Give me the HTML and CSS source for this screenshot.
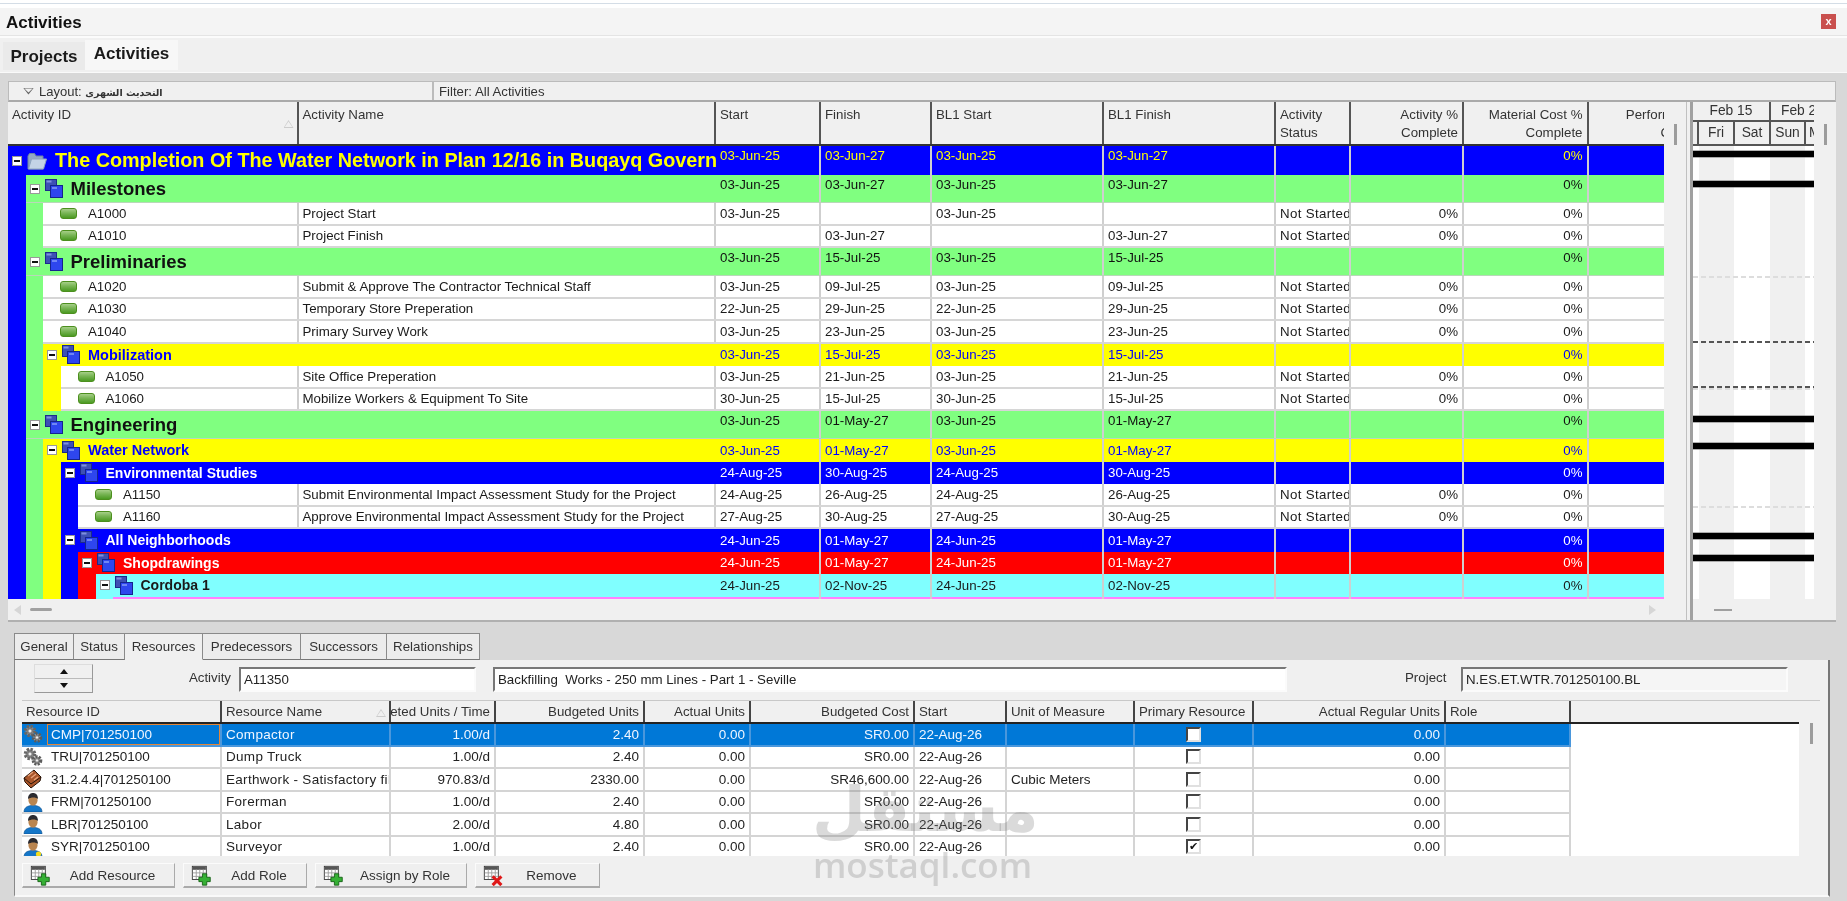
FILE: index.html
```html
<!DOCTYPE html>
<html lang="en">
<head>
<meta charset="utf-8">
<title>Activities</title>
<link rel="stylesheet" href="styles.css">
</head>
<body>
<svg class="defs" width="0" height="0" aria-hidden="true">
  <symbol id="wbs" viewBox="0 0 18 19">
    <rect x="0.5" y="0.5" width="11" height="11" fill="#3d50b4" stroke="#1b2a8c"/>
    <rect x="1.5" y="1.5" width="5" height="2" fill="#7f8fe0"/>
    <rect x="5.5" y="6.5" width="12" height="12" fill="#2e46ee" stroke="#14248e"/>
    <rect x="7" y="8" width="5" height="2" fill="#6f86f5"/>
  </symbol>
  <symbol id="folder" viewBox="0 0 20 18">
    <path d="M1 4 L1 17 L16 17 L16 4 L9 4 L7.5 1.5 L2.5 1.5 Z" fill="#93a9c4" stroke="#6e86a4"/>
    <path d="M1.5 17 L4.5 7 L19.5 7 L16.5 17 Z" fill="#c4d3e6" stroke="#8ea4bf"/>
  </symbol>
  <symbol id="gears" viewBox="0 0 20 20">
    <circle cx="7" cy="7" r="4.6" fill="#8a8a8a" stroke="#666" stroke-width="3.4" stroke-dasharray="2.2 1.4"/>
    <circle cx="7" cy="7" r="2" fill="#eee" stroke="#555" stroke-width=".6"/>
    <circle cx="14" cy="13.5" r="3.8" fill="#9a9a9a" stroke="#5c5c5c" stroke-width="3" stroke-dasharray="2 1.2"/>
    <circle cx="14" cy="13.5" r="1.7" fill="#eee" stroke="#555" stroke-width=".6"/>
  </symbol>
  <symbol id="brick" viewBox="0 0 20 20">
    <path d="M1 9 L11 1 L18 8 L17 12 L8 19 L2 13 Z" fill="#a9562a" stroke="#2a1408"/>
    <path d="M1 9 L8 15 L18 8" fill="none" stroke="#2a1408"/>
    <path d="M5 7 L10 3 M8 9 L13 5 M11 11 L15 8" stroke="#e8a27a" stroke-width="1.4"/>
  </symbol>
  <symbol id="person" viewBox="0 0 20 20">
    <path d="M1 20 C1 15 5 14 8 13.5 L12 13.5 C15 14 19 15 19 20 Z" fill="#1476c8" stroke="#0c4c88" stroke-width=".6"/>
    <ellipse cx="10" cy="8" rx="4.6" ry="5.6" fill="#b98550"/>
    <path d="M5 7 C5 2 8 1 10 1 C13 1 15 3 15 7 C13 5 8 5 5 7 Z" fill="#2b2b30"/>
  </symbol>
  <symbol id="surveyor" viewBox="0 0 20 20">
    <path d="M1 20 C1 15 5 14 8 13.5 L12 13.5 C15 14 19 15 19 20 Z" fill="#1476c8" stroke="#0c4c88" stroke-width=".6"/>
    <ellipse cx="10" cy="8" rx="4.6" ry="5.6" fill="#b98550"/>
    <path d="M5 7 C5 2 8 1 10 1 C13 1 15 3 15 7 C13 5 8 5 5 7 Z" fill="#2b2b30"/>
    <circle cx="15.5" cy="17" r="2.6" fill="#f4dc1c"/>
  </symbol>
  <symbol id="table-add" viewBox="0 0 24 24">
    <rect x="1.5" y="1.5" width="16" height="15" fill="#fff" stroke="#333"/>
    <rect x="2" y="2" width="15" height="3.5" fill="#555"/>
    <path d="M2 9 H17 M2 13 H17 M6 5 V16 M10 5 V16 M14 5 V16" stroke="#999"/>
    <path d="M13 10 H18 V14 H22 V19 H18 V23 H13 V19 H9 V14 H13 Z" fill="#35b034" stroke="#155f15"/>
  </symbol>
  <symbol id="table-del" viewBox="0 0 24 24">
    <rect x="1.5" y="1.5" width="16" height="15" fill="#fff" stroke="#333"/>
    <rect x="2" y="2" width="15" height="3.5" fill="#555"/>
    <path d="M2 9 H17 M2 13 H17 M6 5 V16 M10 5 V16 M14 5 V16" stroke="#999"/>
    <path d="M11 13 L21 23 M21 13 L11 23" stroke="#e01818" stroke-width="3.6"/>
  </symbol>
</svg>

<div class="app">
  <div class="topstrip"></div>
  <header class="titlebar">
    <span class="title-text">Activities</span>
    <span class="close">x</span>
  </header>
  <nav class="maintabs">
    <span class="maintab">Projects</span>
    <span class="maintab active">Activities</span>
  </nav>

  <main class="workspace">
    <section class="upper">
      <div class="filterbar">
        <div class="layout-cell"><span class="down-tri"></span><span>Layout: <span class="arabic">التحديث الشهرى</span></span></div>
        <div class="filter-cell">Filter: All Activities</div>
      </div>

      <div class="panes">
        <div class="sheet">
          <div class="sheet-head">
            <div class="hc hc-id">Activity ID<span class="sort"></span></div>
            <div class="hc c-name">Activity Name</div>
            <div class="hc c-s">Start</div>
            <div class="hc c-f">Finish</div>
            <div class="hc c-bs">BL1 Start</div>
            <div class="hc c-bf">BL1 Finish</div>
            <div class="hc c-st">Activity<br>Status</div>
            <div class="hc c-a r">Activity %<br>Complete</div>
            <div class="hc c-m r">Material Cost %<br>Complete</div>
            <div class="hc c-pf r last"><div class="perf-inner">Performance %<br>Complete</div></div>
          </div>

          <div class="sheet-body">
            <div class="row h29 bg-blue fg-yellow top">
              <div class="title"><span class="tog"></span><svg class="i-folder"><use href="#folder"/></svg><span class="t-root">The Completion Of The Water Network in Plan 12/16 in Buqayq Governorate</span></div>
              <div class="c c-s">03-Jun-25</div><div class="c c-f">03-Jun-27</div><div class="c c-bs">03-Jun-25</div><div class="c c-bf">03-Jun-27</div><div class="c c-st"></div><div class="c c-a"></div><div class="c c-m r">0%</div><div class="c c-pf last"></div>
            </div>
            <div class="kids bg-blue">

              <div class="row h28 bg-green top">
                <div class="title"><span class="tog"></span><svg class="i-wbs"><use href="#wbs"/></svg><span class="t-l1">Milestones</span></div>
                <div class="c c-s">03-Jun-25</div><div class="c c-f">03-Jun-27</div><div class="c c-bs">03-Jun-25</div><div class="c c-bf">03-Jun-27</div><div class="c c-st"></div><div class="c c-a"></div><div class="c c-m r">0%</div><div class="c c-pf last"></div>
              </div>
              <div class="kids bg-green">
                <div class="row act"><div class="c c-id"><span class="a-ico"></span>A1000</div><div class="c c-name">Project Start</div><div class="c c-s">03-Jun-25</div><div class="c c-f"></div><div class="c c-bs">03-Jun-25</div><div class="c c-bf"></div><div class="c c-st">Not Started</div><div class="c c-a r">0%</div><div class="c c-m r">0%</div><div class="c c-pf last"></div></div>
                <div class="row act"><div class="c c-id"><span class="a-ico"></span>A1010</div><div class="c c-name">Project Finish</div><div class="c c-s"></div><div class="c c-f">03-Jun-27</div><div class="c c-bs"></div><div class="c c-bf">03-Jun-27</div><div class="c c-st">Not Started</div><div class="c c-a r">0%</div><div class="c c-m r">0%</div><div class="c c-pf last"></div></div>
              </div>

              <div class="row h28 bg-green top">
                <div class="title"><span class="tog"></span><svg class="i-wbs"><use href="#wbs"/></svg><span class="t-l1">Preliminaries</span></div>
                <div class="c c-s">03-Jun-25</div><div class="c c-f">15-Jul-25</div><div class="c c-bs">03-Jun-25</div><div class="c c-bf">15-Jul-25</div><div class="c c-st"></div><div class="c c-a"></div><div class="c c-m r">0%</div><div class="c c-pf last"></div>
              </div>
              <div class="kids bg-green">
                <div class="row act"><div class="c c-id"><span class="a-ico"></span>A1020</div><div class="c c-name">Submit &amp; Approve The Contractor Technical Staff</div><div class="c c-s">03-Jun-25</div><div class="c c-f">09-Jul-25</div><div class="c c-bs">03-Jun-25</div><div class="c c-bf">09-Jul-25</div><div class="c c-st">Not Started</div><div class="c c-a r">0%</div><div class="c c-m r">0%</div><div class="c c-pf last"></div></div>
                <div class="row act"><div class="c c-id"><span class="a-ico"></span>A1030</div><div class="c c-name">Temporary Store Preperation</div><div class="c c-s">22-Jun-25</div><div class="c c-f">29-Jun-25</div><div class="c c-bs">22-Jun-25</div><div class="c c-bf">29-Jun-25</div><div class="c c-st">Not Started</div><div class="c c-a r">0%</div><div class="c c-m r">0%</div><div class="c c-pf last"></div></div>
                <div class="row act"><div class="c c-id"><span class="a-ico"></span>A1040</div><div class="c c-name">Primary Survey Work</div><div class="c c-s">03-Jun-25</div><div class="c c-f">23-Jun-25</div><div class="c c-bs">03-Jun-25</div><div class="c c-bf">23-Jun-25</div><div class="c c-st">Not Started</div><div class="c c-a r">0%</div><div class="c c-m r">0%</div><div class="c c-pf last"></div></div>

                <div class="row wbs bg-yellow fg-blue">
                  <div class="title"><span class="tog"></span><svg class="i-wbs"><use href="#wbs"/></svg><span class="t-l2">Mobilization</span></div>
                  <div class="c c-s">03-Jun-25</div><div class="c c-f">15-Jul-25</div><div class="c c-bs">03-Jun-25</div><div class="c c-bf">15-Jul-25</div><div class="c c-st"></div><div class="c c-a"></div><div class="c c-m r">0%</div><div class="c c-pf last"></div>
                </div>
                <div class="kids bg-yellow">
                  <div class="row act"><div class="c c-id"><span class="a-ico"></span>A1050</div><div class="c c-name">Site Office Preperation</div><div class="c c-s">03-Jun-25</div><div class="c c-f">21-Jun-25</div><div class="c c-bs">03-Jun-25</div><div class="c c-bf">21-Jun-25</div><div class="c c-st">Not Started</div><div class="c c-a r">0%</div><div class="c c-m r">0%</div><div class="c c-pf last"></div></div>
                  <div class="row act"><div class="c c-id"><span class="a-ico"></span>A1060</div><div class="c c-name">Mobilize Workers &amp; Equipment To Site</div><div class="c c-s">30-Jun-25</div><div class="c c-f">15-Jul-25</div><div class="c c-bs">30-Jun-25</div><div class="c c-bf">15-Jul-25</div><div class="c c-st">Not Started</div><div class="c c-a r">0%</div><div class="c c-m r">0%</div><div class="c c-pf last"></div></div>
                </div>
              </div>

              <div class="row h28 bg-green top">
                <div class="title"><span class="tog"></span><svg class="i-wbs"><use href="#wbs"/></svg><span class="t-l1">Engineering</span></div>
                <div class="c c-s">03-Jun-25</div><div class="c c-f">01-May-27</div><div class="c c-bs">03-Jun-25</div><div class="c c-bf">01-May-27</div><div class="c c-st"></div><div class="c c-a"></div><div class="c c-m r">0%</div><div class="c c-pf last"></div>
              </div>
              <div class="kids bg-green">
                <div class="row wbs bg-yellow fg-blue">
                  <div class="title"><span class="tog"></span><svg class="i-wbs"><use href="#wbs"/></svg><span class="t-l2">Water Network</span></div>
                  <div class="c c-s">03-Jun-25</div><div class="c c-f">01-May-27</div><div class="c c-bs">03-Jun-25</div><div class="c c-bf">01-May-27</div><div class="c c-st"></div><div class="c c-a"></div><div class="c c-m r">0%</div><div class="c c-pf last"></div>
                </div>
                <div class="kids bg-yellow">
                  <div class="row wbs bg-blue fg-white">
                    <div class="title"><span class="tog"></span><svg class="i-wbs"><use href="#wbs"/></svg><span class="t-l3">Environmental Studies</span></div>
                    <div class="c c-s">24-Aug-25</div><div class="c c-f">30-Aug-25</div><div class="c c-bs">24-Aug-25</div><div class="c c-bf">30-Aug-25</div><div class="c c-st"></div><div class="c c-a"></div><div class="c c-m r">0%</div><div class="c c-pf last"></div>
                  </div>
                  <div class="kids bg-blue">
                    <div class="row act"><div class="c c-id"><span class="a-ico"></span>A1150</div><div class="c c-name">Submit Environmental Impact Assessment Study for the Project</div><div class="c c-s">24-Aug-25</div><div class="c c-f">26-Aug-25</div><div class="c c-bs">24-Aug-25</div><div class="c c-bf">26-Aug-25</div><div class="c c-st">Not Started</div><div class="c c-a r">0%</div><div class="c c-m r">0%</div><div class="c c-pf last"></div></div>
                    <div class="row act"><div class="c c-id"><span class="a-ico"></span>A1160</div><div class="c c-name">Approve Environmental Impact Assessment Study for the Project</div><div class="c c-s">27-Aug-25</div><div class="c c-f">30-Aug-25</div><div class="c c-bs">27-Aug-25</div><div class="c c-bf">30-Aug-25</div><div class="c c-st">Not Started</div><div class="c c-a r">0%</div><div class="c c-m r">0%</div><div class="c c-pf last"></div></div>
                  </div>
                  <div class="row wbs bg-blue fg-white">
                    <div class="title"><span class="tog"></span><svg class="i-wbs"><use href="#wbs"/></svg><span class="t-l3">All Neighborhoods</span></div>
                    <div class="c c-s">24-Jun-25</div><div class="c c-f">01-May-27</div><div class="c c-bs">24-Jun-25</div><div class="c c-bf">01-May-27</div><div class="c c-st"></div><div class="c c-a"></div><div class="c c-m r">0%</div><div class="c c-pf last"></div>
                  </div>
                  <div class="kids bg-blue">
                    <div class="row wbs bg-red fg-white">
                      <div class="title"><span class="tog"></span><svg class="i-wbs"><use href="#wbs"/></svg><span class="t-l3">Shopdrawings</span></div>
                      <div class="c c-s">24-Jun-25</div><div class="c c-f">01-May-27</div><div class="c c-bs">24-Jun-25</div><div class="c c-bf">01-May-27</div><div class="c c-st"></div><div class="c c-a"></div><div class="c c-m r">0%</div><div class="c c-pf last"></div>
                    </div>
                    <div class="kids bg-red">
                      <div class="row wbs bg-cyan">
                        <div class="title"><span class="tog"></span><svg class="i-wbs"><use href="#wbs"/></svg><span class="t-l3">Cordoba 1</span></div>
                        <div class="c c-s">24-Jun-25</div><div class="c c-f">02-Nov-25</div><div class="c c-bs">24-Jun-25</div><div class="c c-bf">02-Nov-25</div><div class="c c-st"></div><div class="c c-a"></div><div class="c c-m r">0%</div><div class="c c-pf last"></div>
                      </div>
                      <div class="kids bg-cyan">
                        <div class="row wbs bg-pink">
                          <div class="title"></div>
                          <div class="c c-s"></div><div class="c c-f"></div><div class="c c-bs"></div><div class="c c-bf"></div><div class="c c-st"></div><div class="c c-a"></div><div class="c c-m"></div><div class="c c-pf last"></div>
                        </div>
                      </div>
                    </div>
                  </div>
                </div>
              </div>

            </div>
          </div>
        </div>

        <div class="gutter"><span class="v-handle"></span></div>
        <div class="splitter"></div>

        <div class="gantt">
          <div class="g-months">
            <div class="g-m1">Feb 15</div>
            <div class="g-m2">Feb 22</div>
          </div>
          <div class="g-days">
            <div class="g-d0"></div>
            <div class="g-d">Fri</div>
            <div class="g-d">Sat</div>
            <div class="g-d g-d3">Sun</div>
            <div class="g-d g-d4">Mon</div>
          </div>
          <div class="g-body">
            <span class="bar y1"></span>
            <span class="bar y2"></span>
            <span class="dash light y3"></span>
            <span class="dash y4"></span>
            <span class="dash y5"></span>
            <span class="dash light y6"></span>
            <span class="bar y7"></span>
            <span class="bar y8"></span>
            <span class="dash light y9"></span>
            <span class="bar y10"></span>
            <span class="bar y11"></span>
          </div>
        </div>
        <div class="gutter"><span class="v-handle"></span></div>
      </div>

      <div class="hscroll">
        <div class="hs-left">
          <span class="arrow-l"></span><span class="h-handle"></span>
          <span class="arrow-r"></span>
        </div>
        <div class="splitter"></div>
        <div class="hs-right"><span class="h-handle2"></span></div>
      </div>
    </section>

    <section class="lower">
      <div class="subtabs">
        <span class="subtab t-general">General</span>
        <span class="subtab t-status">Status</span>
        <span class="subtab t-res active">Resources</span>
        <span class="subtab t-pred">Predecessors</span>
        <span class="subtab t-succ">Successors</span>
        <span class="subtab t-rel">Relationships</span>
      </div>
      <div class="subpanel">
        <div class="form">
          <div class="stepper">
            <div class="step"><span class="tri-up"></span></div>
            <div class="step"><span class="tri-down"></span></div>
          </div>
          <span class="lbl lbl-activity">Activity</span>
          <div class="field f-activity">A11350</div>
          <div class="field f-desc">Backfilling&nbsp; Works - 250 mm Lines - Part 1 - Seville</div>
          <span class="lbl lbl-project">Project</span>
          <div class="field f-project">N.ES.ET.WTR.701250100.BL</div>
        </div>

        <div class="rgrid">
          <div class="rgrid-main">
            <div class="rhead">
              <div class="rh g1">Resource ID</div>
              <div class="rh g2">Resource Name<span class="sort sort2"></span></div>
              <div class="rh g3 clipleft"><span>Budgeted Units / Time</span></div>
              <div class="rh g4 r">Budgeted Units</div>
              <div class="rh g5 r">Actual Units</div>
              <div class="rh g6 r">Budgeted Cost</div>
              <div class="rh g7">Start</div>
              <div class="rh g8">Unit of Measure</div>
              <div class="rh g9">Primary Resource</div>
              <div class="rh g10 r">Actual Regular Units</div>
              <div class="rh g11">Role</div>
              <div class="rh g12"></div>
            </div>

            <div class="rrow selected">
              <div class="rc g1"><svg class="r-ico"><use href="#gears"/></svg><span class="rid focus">CMP|701250100</span></div>
              <div class="rc g2">Compactor</div><div class="rc g3 r">1.00/d</div><div class="rc g4 r">2.40</div><div class="rc g5 r">0.00</div><div class="rc g6 r">SR0.00</div><div class="rc g7">22-Aug-26</div><div class="rc g8"></div><div class="rc g9"><span class="chk"></span></div><div class="rc g10 r">0.00</div><div class="rc g11"></div>
            </div>
            <div class="rrow">
              <div class="rc g1"><svg class="r-ico"><use href="#gears"/></svg><span class="rid">TRU|701250100</span></div>
              <div class="rc g2">Dump Truck</div><div class="rc g3 r">1.00/d</div><div class="rc g4 r">2.40</div><div class="rc g5 r">0.00</div><div class="rc g6 r">SR0.00</div><div class="rc g7">22-Aug-26</div><div class="rc g8"></div><div class="rc g9"><span class="chk"></span></div><div class="rc g10 r">0.00</div><div class="rc g11"></div>
            </div>
            <div class="rrow">
              <div class="rc g1"><svg class="r-ico"><use href="#brick"/></svg><span class="rid">31.2.4.4|701250100</span></div>
              <div class="rc g2">Earthwork - Satisfactory fill</div><div class="rc g3 r">970.83/d</div><div class="rc g4 r">2330.00</div><div class="rc g5 r">0.00</div><div class="rc g6 r">SR46,600.00</div><div class="rc g7">22-Aug-26</div><div class="rc g8">Cubic Meters</div><div class="rc g9"><span class="chk"></span></div><div class="rc g10 r">0.00</div><div class="rc g11"></div>
            </div>
            <div class="rrow">
              <div class="rc g1"><svg class="r-ico"><use href="#person"/></svg><span class="rid">FRM|701250100</span></div>
              <div class="rc g2">Forerman</div><div class="rc g3 r">1.00/d</div><div class="rc g4 r">2.40</div><div class="rc g5 r">0.00</div><div class="rc g6 r">SR0.00</div><div class="rc g7">22-Aug-26</div><div class="rc g8"></div><div class="rc g9"><span class="chk"></span></div><div class="rc g10 r">0.00</div><div class="rc g11"></div>
            </div>
            <div class="rrow">
              <div class="rc g1"><svg class="r-ico"><use href="#person"/></svg><span class="rid">LBR|701250100</span></div>
              <div class="rc g2">Labor</div><div class="rc g3 r">2.00/d</div><div class="rc g4 r">4.80</div><div class="rc g5 r">0.00</div><div class="rc g6 r">SR0.00</div><div class="rc g7">22-Aug-26</div><div class="rc g8"></div><div class="rc g9"><span class="chk"></span></div><div class="rc g10 r">0.00</div><div class="rc g11"></div>
            </div>
            <div class="rrow">
              <div class="rc g1"><svg class="r-ico"><use href="#surveyor"/></svg><span class="rid">SYR|701250100</span></div>
              <div class="rc g2">Surveyor</div><div class="rc g3 r">1.00/d</div><div class="rc g4 r">2.40</div><div class="rc g5 r">0.00</div><div class="rc g6 r">SR0.00</div><div class="rc g7">22-Aug-26</div><div class="rc g8"></div><div class="rc g9"><span class="chk on">✔</span></div><div class="rc g10 r">0.00</div><div class="rc g11"></div>
            </div>
          </div>
          <div class="rgutter"><span class="v-handle"></span></div>
        </div>

        <div class="actions">
          <div class="btn b1"><svg class="b-ico"><use href="#table-add"/></svg><span>Add Resource</span></div>
          <div class="btn b2"><svg class="b-ico"><use href="#table-add"/></svg><span>Add Role</span></div>
          <div class="btn b3"><svg class="b-ico"><use href="#table-add"/></svg><span>Assign by Role</span></div>
          <div class="btn b4"><svg class="b-ico"><use href="#table-del"/></svg><span>Remove</span></div>
        </div>
      </div>
    </section>
  </main>

  <div class="watermark">
    <div class="wm-ar">مستقل</div>
    <div class="wm-en">mostaql.com</div>
  </div>
</div>
</body>
</html>
```

FILE: styles.css
```css
* { box-sizing: border-box; }
html, body { margin: 0; padding: 0; }
body {
  width: 1847px;
  height: 901px;
  overflow: hidden;
  background: #fff;
  font-family: "Liberation Sans", Arial, sans-serif;
  font-size: 13.3px;
  color: #1a1a1a;
}
.defs { position: absolute; }
.app { position: relative; width: 1847px; height: 901px; display: flex; flex-direction: column; background: #f0f0f0; filter: blur(.35px); }
.topstrip { height: 8px; background: #fff; border-top: 3px solid #fff; box-shadow: inset 0 1px 0 #d4dde6; }
.titlebar {
  height: 28px; flex: none; display: flex; align-items: center; justify-content: space-between;
  padding: 3px 11px 0 6px; background: #f4f4f4; border-bottom: 1px solid #e4e4e4;
}
.title-text { font-weight: 700; font-size: 17px; color: #111; }
.close {
  width: 15px; height: 15px; margin-top: -3px; background: #c9504e; color: #fff; font-weight: 700; font-size: 11px;
  display: flex; align-items: center; justify-content: center; line-height: 1;
}
.maintabs { height: 37px; flex: none; display: flex; align-items: flex-end; padding: 0 0 2px 3px; background: #f0f0f0; border-top: 2px solid #fbfbfb; border-bottom: 1px solid #fafafa; }
.maintab { height: 28px; width: 82px; display: flex; align-items: center; justify-content: center; padding-top: 2px; background: #eaeaea; font-weight: 700; font-size: 17px; color: #1a1a1a; }
.maintab.active { height: 30px; width: 93px; background: #f7f7f7; padding-top: 0; padding-bottom: 2px; }

.workspace { flex: 1; min-height: 0; background: #d8d8d8; padding: 8px 11px 0 8px; display: flex; flex-direction: column; }

/* upper pane */
.upper { width: 1828px; height: 541px; flex: none; background: #f0f0f0; display: flex; flex-direction: column; border-bottom: 2px solid #b0b0b0; }
.filterbar { height: 21px; flex: none; display: flex; background: #f0f0f0; border: 1px solid #bbb; border-bottom: 2px solid #aaa; }
.layout-cell { width: 425px; border-right: 2px solid #bbb; display: flex; align-items: center; padding-left: 14px; gap: 5px; font-size: 13px; color: #333; }
.arabic { font-family: "DejaVu Sans", sans-serif; font-size: 9.5px; font-weight: 700; }
.down-tri { width: 11px; height: 7px; background: #666; clip-path: polygon(0 0,100% 0,50% 100%,42% 85%,50% 72%,88% 14%,12% 14%,50% 72%,42% 85%); }
.filter-cell { flex: 1; padding-left: 5px; display: flex; align-items: center; font-size: 13.2px; color: #333; }
.panes { height: 497px; flex: none; display: flex; overflow: hidden; }

.sheet { width: 1656px; flex: none; overflow: hidden; display: flex; flex-direction: column; background: #fff; }
.sheet-head { height: 44px; flex: none; display: flex; background: #f0f0f0; border-bottom: 2px solid #333; }
.hc { position: relative; height: 100%; padding: 4px 4px 0 4px; line-height: 17.5px; border-right: 2px solid #555; font-size: 13.3px; color: #333; overflow: hidden; white-space: nowrap; }
.hc-id { flex: 1; }
.hc.last, .c.last { border-right: none; }
.perf-inner { width: 125px; }
.sort { position: absolute; right: 3px; bottom: 16px; width: 10px; height: 8px; background: #ccc; clip-path: polygon(50% 0,100% 100%,0 100%,8% 86%,88% 86%,50% 18%,12% 86%,0 100%); }
.sort2 { bottom: 5px; }
.r { text-align: right; }

.c-name { width: 417.5px; flex: none; }
.c-s { width: 105px; flex: none; }
.c-f { width: 111px; flex: none; }
.c-bs { width: 172px; flex: none; }
.c-bf { width: 172px; flex: none; }
.c-st { width: 75px; flex: none; }
.c-a { width: 113px; flex: none; }
.c-m { width: 124.5px; flex: none; }
.c-pf { width: 75.5px; flex: none; }

.sheet-body { flex: 1; min-height: 0; overflow: hidden; }
.kids { padding-left: 17.5px; }
.row { display: flex; height: 22.5px; color: #1a1a1a; }
.h29 { height: 29px; }
.h28 { height: 28px; }
.act { background: #fff; border-bottom: 2px solid #d6d6d6; }
.bg-blue { background: #0000ff; }
.bg-green { background: #80ff80; }
.bg-yellow { background: #ffff00; }
.bg-red { background: #ff0000; }
.bg-cyan { background: #80ffff; }
.bg-pink { background: #ff80ff; }
.fg-yellow { color: #ffff00; }
.fg-blue { color: #0000ff; }
.fg-white { color: #fff; }
.row.bg-green { color: #111; border-bottom: 1px solid #b9d8b9; }

.title { flex: 1; min-width: 0; display: flex; align-items: center; overflow: hidden; white-space: nowrap; padding-left: 4px; font-weight: 700; }
.tog { width: 10px; height: 10px; flex: none; background: #fff; border: 1px solid #999; display: flex; align-items: center; justify-content: center; }
.tog::before { content: ""; width: 6px; height: 2px; background: #111; }
.i-wbs { width: 18px; height: 19px; flex: none; margin-left: 5px; margin-right: 8px; }
.i-folder { width: 20px; height: 18px; flex: none; margin-left: 5px; margin-right: 8px; }
.t-root { font-size: 19.8px; }
.t-l1 { font-size: 18.5px; }
.t-l2 { font-size: 14.5px; }
.t-l3 { font-size: 14px; }

.c { height: 100%; padding: 0 4px; display: flex; align-items: center; white-space: nowrap; overflow: hidden; border-right: 2px solid #cfcfcf; font-size: 13.3px; }
.c.r { justify-content: flex-end; }
.c.c-st { letter-spacing: .35px; }
.top .c { align-items: flex-start; padding-top: 2px; }
.c-id { flex: 1; min-width: 0; padding-left: 17px; }
.a-ico { width: 17px; height: 11px; flex: none; margin-right: 11px; border-radius: 3px; border: 1px solid #4c8f1e; background: linear-gradient(#a6cf88, #79b556 45%, #4b9a22); }

/* gantt */
.gutter { width: 22px; flex: none; background: #f0f0f0; padding: 22px 0 0 10px; }
.v-handle { display: block; width: 3px; height: 21px; background: #9c9c9c; }
.splitter { width: 7px; flex: none; background: linear-gradient(90deg, #c0c0c0 0 1px, #f0f0f0 1px 4px, #a0a0a0 4px 7px); }
.gantt { width: 121px; flex: none; display: flex; flex-direction: column; background: #f0f0f0; overflow: hidden; font-size: 13.8px; color: #333; }
.g-months { height: 20px; flex: none; display: flex; border-bottom: 2px solid #555; }
.g-m1 { width: 78px; flex: none; text-align: center; line-height: 18px; border-right: 2px solid #555; }
.g-m2 { flex: 1; padding-left: 10px; line-height: 18px; white-space: nowrap; overflow: hidden; }
.g-days { height: 24px; flex: none; display: flex; border-bottom: 2px solid #555; }
.g-d0 { width: 6px; flex: none; border-right: 2px solid #555; }
.g-d { width: 36px; flex: none; text-align: center; line-height: 22px; border-right: 2px solid #555; }
.g-d3 { width: 35px; }
.g-d4 { width: 8px; border-right: none; overflow: hidden; text-align: left; padding-left: 3px; }
.g-body { position: relative; flex: 1; background: linear-gradient(90deg, #fff 0 6px, #f0f0f0 6px 41px, #fff 41px 77px, #f0f0f0 77px 112px, #fff 112px); }
.bar { position: absolute; left: 0; right: 0; height: 6px; background: #000; box-shadow: 0 0 0 .5px #666; }
.dash { position: absolute; left: 0; right: 0; height: 2px; background: repeating-linear-gradient(90deg, #555 0 5px, transparent 5px 8px); }
.dash.light { background: repeating-linear-gradient(90deg, #ddd 0 5px, transparent 5px 8px); }
.y1 { top: 5px; } .y2 { top: 35px; } .y3 { top: 130px; } .y4 { top: 195px; } .y5 { top: 240px; } .y6 { top: 242px; }
.y7 { top: 270px; } .y8 { top: 297px; } .y9 { top: 360px; } .y10 { top: 387px; } .y11 { top: 409px; }

.hscroll { flex: 1; min-height: 0; display: flex; background: #f0f0f0; }
.hs-left { width: 1678px; flex: none; display: flex; align-items: center; padding-left: 6px; }
.arrow-l { width: 0; height: 0; border: 5px solid transparent; border-right: 7px solid #d6d6d6; border-left: 0; }
.h-handle { width: 22px; height: 3px; margin-left: 9px; background: #a0a0a0; border-radius: 2px; }
.arrow-r { width: 0; height: 0; margin-left: auto; margin-right: 30px; border: 5px solid transparent; border-left: 7px solid #d6d6d6; border-right: 0; }
.hs-right { flex: 1; display: flex; align-items: center; padding-left: 21px; }
.h-handle2 { width: 18px; height: 2px; background: #a0a0a0; }

/* lower pane */
.lower { flex: 1; min-height: 0; padding: 11px 0 4px 6px; display: flex; flex-direction: column; }
.subtabs { height: 27px; flex: none; display: flex; }
.subtab { height: 27px; display: flex; align-items: center; justify-content: center; background: #ececec; border: 1px solid #8a8a8a; border-left: 0; border-bottom: 1px solid #777; font-size: 13.3px; color: #333; }
.t-general { width: 60px; border-left: 1px solid #8a8a8a; }
.t-status { width: 51px; }
.t-res { width: 78px; }
.t-pred { width: 98px; }
.t-succ { width: 86px; }
.t-rel { width: 93px; }
.subtab.active { background: #f0f0f0; border-bottom-color: #f0f0f0; }
.subpanel { flex: 1; min-height: 0; width: 1816px; background: #f0f0f0; border-left: 1px solid #888; border-right: 2px solid #777; border-bottom: 2px solid #f9f9f9; padding: 4px 0 0 7px; }
.form { height: 29px; display: flex; align-items: flex-start; padding-left: 12px; }
.stepper { width: 59px; height: 29px; flex: none; border: 1px solid #ddd; border-right-color: #999; border-bottom-color: #999; display: flex; flex-direction: column; }
.step { flex: 1; display: flex; align-items: center; justify-content: center; border-bottom: 1px solid #bbb; }
.step:last-child { border-bottom: 0; }
.tri-up { width: 0; height: 0; border: 4px solid transparent; border-top: 0; border-bottom: 5px solid #111; }
.tri-down { width: 0; height: 0; border: 4px solid transparent; border-bottom: 0; border-top: 5px solid #111; }
.lbl { font-size: 13.3px; color: #333; margin-top: 6px; }
.lbl-activity { margin-left: 92px; width: 46px; text-align: right; }
.field { height: 25px; margin-top: 3px; padding-left: 3px; background: #fff; border: 2px solid #fbfbfb; border-top-color: #777; border-left-color: #777; display: flex; align-items: center; font-size: 13.3px; white-space: nowrap; color: #222; }
.f-activity { width: 237px; margin-left: 8px; }
.f-desc { width: 794px; margin-left: 17px; }
.lbl-project { margin-left: 118px; width: 44px; }
.f-project { width: 327px; margin-left: 12px; background: #f5f5f5; }

.rgrid { width: 1798px; height: 156px; margin-top: 7px; display: flex; background: #fff; overflow: hidden; border-top: 1px solid #c8c8c8; }
.rgrid-main { width: 1777px; flex: none; overflow: hidden; }
.rgutter { flex: 1; background: #f0f0f0; padding: 22px 0 0 11px; }
.rhead { height: 23px; display: flex; background: #f0f0f0; border-bottom: 2px solid #222; }
.rh { height: 100%; padding: 0 4px; display: flex; align-items: center; position: relative; border-right: 2px solid #444; white-space: nowrap; overflow: hidden; font-size: 13.3px; color: #333; }
.rh.r { justify-content: flex-end; }
.clipleft { justify-content: flex-end; }
.clipleft span { flex: none; }
.rh.g12 { border-right: 0; }
.g1 { width: 200px; flex: none; }
.g2 { width: 169px; flex: none; }
.g3 { width: 105px; flex: none; }
.g4 { width: 149px; flex: none; }
.g5 { width: 106px; flex: none; }
.g6 { width: 164px; flex: none; }
.g7 { width: 92px; flex: none; }
.g8 { width: 128px; flex: none; }
.g9 { width: 119px; flex: none; }
.g10 { width: 192px; flex: none; }
.g11 { width: 125px; flex: none; }
.g12 { flex: 1; }
.rrow { height: 22.5px; display: flex; }
.rc { height: 100%; padding: 0 4px; display: flex; align-items: center; white-space: nowrap; overflow: hidden; border-right: 2px solid #d4d4d4; border-bottom: 2px solid #d4d4d4; font-size: 13.5px; color: #222; }
.rc.r { justify-content: flex-end; }
.rc.g1 { padding: 0 0 0 1px; gap: 8px; }
.rc.g2 { letter-spacing: .3px; }
.rc.g9 { justify-content: center; }
.r-ico { width: 20px; height: 20px; flex: none; }
.rid { flex: 1; height: 100%; display: flex; align-items: center; }
.selected .rc { background: #0078d7; color: #f0f6ff; border-bottom-color: #4a97dc; border-right-color: #4a97dc; }
.focus { margin-left: -4px; padding-left: 3px; border: 1px solid #e2873a; }
.chk { width: 15px; height: 15px; background: #fff; border: 2px solid #e0e0e0; border-top-color: #444; border-left-color: #444; display: flex; align-items: center; justify-content: center; font-size: 11px; line-height: 1; color: #111; font-family: "DejaVu Sans", sans-serif; }

.actions { margin-top: 7px; display: flex; gap: 8px; }
.btn { height: 25px; display: flex; align-items: center; background: #efefef; border: 1px solid #fbfbfb; border-right: 1px solid #aaa; border-bottom: 2px solid #aaa; font-size: 13.5px; color: #333; padding-left: 7px; }
.btn span { flex: 1; text-align: center; }
.b-ico { width: 21px; height: 21px; flex: none; }
.b1 { width: 153px; }
.b2 { width: 124px; }
.b3 { width: 152px; }
.b4 { width: 125px; }

.watermark { position: absolute; left: 812px; top: 770px; width: 221px; text-align: center; color: rgba(120, 120, 120, .27); pointer-events: none; }
.wm-ar { font-family: "DejaVu Sans", sans-serif; font-weight: 700; font-size: 62px; line-height: 80px; height: 80px; }
.wm-en { font-family: "Open Sans", sans-serif; font-weight: 600; font-size: 35px; line-height: 30px; }
```
